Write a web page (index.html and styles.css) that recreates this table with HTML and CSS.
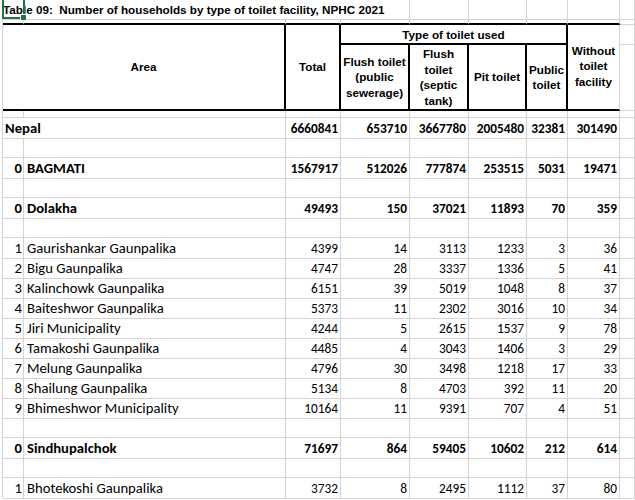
FILE: index.html
```html
<!DOCTYPE html>
<html lang="en">
<head>
<meta charset="utf-8">
<title>Table 09</title>
<link rel="stylesheet" href="styles.css">
</head>
<body>
<div class="sheet">
  <div class="row row-title">
    <div class="c title-cell">Table 09:&nbsp; Number of households by type of toilet facility, NPHC 2021</div>
    <div class="c"></div><div class="c"></div><div class="c"></div><div class="c"></div><div class="c"></div>
  </div>
  <div class="row row-gap">
    <div class="c k"></div><div class="c k"></div><div class="c k"></div><div class="c k"></div><div class="c k"></div><div class="c k"></div><div class="c k"></div><div class="c k"></div><div class="c"></div>
  </div>
  <div class="head">
    <div class="h h-area">Area</div>
    <div class="h h-total">Total</div>
    <div class="h h-type">Type of toilet used</div>
    <div class="h h-sub h-d">Flush toilet<br>(public<br>sewerage)</div>
    <div class="h h-sub h-e">Flush<br>toilet<br>(septic<br>tank)</div>
    <div class="h h-sub h-f">Pit toilet</div>
    <div class="h h-sub h-g">Public<br>toilet</div>
    <div class="h h-without">Without<br>toilet<br>facility</div>
    <div class="h h-i1"></div>
    <div class="h h-i2"></div>
  </div>
  <div class="row row-gap2">
    <div class="c"></div><div class="c"></div><div class="c"></div><div class="c"></div><div class="c"></div><div class="c"></div><div class="c"></div><div class="c"></div><div class="c"></div>
  </div>

  <div class="row data bold">
    <div class="c name span2 nepal">Nepal</div>
    <div class="c num">6660841</div><div class="c num">653710</div><div class="c num">3667780</div><div class="c num">2005480</div><div class="c num">32381</div><div class="c num">301490</div><div class="c"></div>
  </div>
  <div class="row data"><div class="c"></div><div class="c"></div><div class="c"></div><div class="c"></div><div class="c"></div><div class="c"></div><div class="c"></div><div class="c"></div><div class="c"></div></div>
  <div class="row data bold">
    <div class="c idx">0</div><div class="c name">BAGMATI</div>
    <div class="c num">1567917</div><div class="c num">512026</div><div class="c num">777874</div><div class="c num">253515</div><div class="c num">5031</div><div class="c num">19471</div><div class="c"></div>
  </div>
  <div class="row data"><div class="c"></div><div class="c"></div><div class="c"></div><div class="c"></div><div class="c"></div><div class="c"></div><div class="c"></div><div class="c"></div><div class="c"></div></div>
  <div class="row data bold">
    <div class="c idx">0</div><div class="c name">Dolakha</div>
    <div class="c num">49493</div><div class="c num">150</div><div class="c num">37021</div><div class="c num">11893</div><div class="c num">70</div><div class="c num">359</div><div class="c"></div>
  </div>
  <div class="row data"><div class="c"></div><div class="c"></div><div class="c"></div><div class="c"></div><div class="c"></div><div class="c"></div><div class="c"></div><div class="c"></div><div class="c"></div></div>
  <div class="row data">
    <div class="c idx">1</div><div class="c name">Gaurishankar Gaunpalika</div>
    <div class="c num">4399</div><div class="c num">14</div><div class="c num">3113</div><div class="c num">1233</div><div class="c num">3</div><div class="c num">36</div><div class="c"></div>
  </div>
  <div class="row data">
    <div class="c idx">2</div><div class="c name">Bigu Gaunpalika</div>
    <div class="c num">4747</div><div class="c num">28</div><div class="c num">3337</div><div class="c num">1336</div><div class="c num">5</div><div class="c num">41</div><div class="c"></div>
  </div>
  <div class="row data">
    <div class="c idx">3</div><div class="c name">Kalinchowk Gaunpalika</div>
    <div class="c num">6151</div><div class="c num">39</div><div class="c num">5019</div><div class="c num">1048</div><div class="c num">8</div><div class="c num">37</div><div class="c"></div>
  </div>
  <div class="row data">
    <div class="c idx">4</div><div class="c name">Baiteshwor Gaunpalika</div>
    <div class="c num">5373</div><div class="c num">11</div><div class="c num">2302</div><div class="c num">3016</div><div class="c num">10</div><div class="c num">34</div><div class="c"></div>
  </div>
  <div class="row data">
    <div class="c idx">5</div><div class="c name">Jiri Municipality</div>
    <div class="c num">4244</div><div class="c num">5</div><div class="c num">2615</div><div class="c num">1537</div><div class="c num">9</div><div class="c num">78</div><div class="c"></div>
  </div>
  <div class="row data">
    <div class="c idx">6</div><div class="c name">Tamakoshi Gaunpalika</div>
    <div class="c num">4485</div><div class="c num">4</div><div class="c num">3043</div><div class="c num">1406</div><div class="c num">3</div><div class="c num">29</div><div class="c"></div>
  </div>
  <div class="row data">
    <div class="c idx">7</div><div class="c name">Melung Gaunpalika</div>
    <div class="c num">4796</div><div class="c num">30</div><div class="c num">3498</div><div class="c num">1218</div><div class="c num">17</div><div class="c num">33</div><div class="c"></div>
  </div>
  <div class="row data">
    <div class="c idx">8</div><div class="c name">Shailung Gaunpalika</div>
    <div class="c num">5134</div><div class="c num">8</div><div class="c num">4703</div><div class="c num">392</div><div class="c num">11</div><div class="c num">20</div><div class="c"></div>
  </div>
  <div class="row data">
    <div class="c idx">9</div><div class="c name">Bhimeshwor Municipality</div>
    <div class="c num">10164</div><div class="c num">11</div><div class="c num">9391</div><div class="c num">707</div><div class="c num">4</div><div class="c num">51</div><div class="c"></div>
  </div>
  <div class="row data"><div class="c"></div><div class="c"></div><div class="c"></div><div class="c"></div><div class="c"></div><div class="c"></div><div class="c"></div><div class="c"></div><div class="c"></div></div>
  <div class="row data bold">
    <div class="c idx">0</div><div class="c name">Sindhupalchok</div>
    <div class="c num">71697</div><div class="c num">864</div><div class="c num">59405</div><div class="c num">10602</div><div class="c num">212</div><div class="c num">614</div><div class="c"></div>
  </div>
  <div class="row data"><div class="c"></div><div class="c"></div><div class="c"></div><div class="c"></div><div class="c"></div><div class="c"></div><div class="c"></div><div class="c"></div><div class="c"></div></div>
  <div class="row data">
    <div class="c idx">1</div><div class="c name">Bhotekoshi Gaunpalika</div>
    <div class="c num">3732</div><div class="c num">8</div><div class="c num">2495</div><div class="c num">1112</div><div class="c num">37</div><div class="c num">80</div><div class="c"></div>
  </div>

  <div class="selection"><span class="handle"></span></div>
</div>
</body>
</html>
```

FILE: styles.css
```css
html, body {
  margin: 0;
  padding: 0;
  background: #fff;
  overflow: hidden;
}
body {
  width: 635px;
  height: 500px;
  color: #000;
}
.sheet {
  position: relative;
  margin-left: 2px;
  border-left: 1px solid #d4d4d4;
  width: 632px;
  display: flex;
  flex-direction: column;
}
.row, .head {
  display: grid;
  grid-template-columns: 21px 262px 55px 69px 59px 58px 41px 52px 15px;
}
.c {
  box-sizing: border-box;
  border-right: 1px solid #d4d4d4;
  border-bottom: 1px solid #d4d4d4;
  min-width: 0;
}
.row-title { height: 20px; }
.title-cell {
  grid-column: 1 / 5;
  font-family: "Liberation Sans", Arial, sans-serif;
  font-weight: bold;
  font-size: 11.7px;
  line-height: 19px;
  white-space: nowrap;
}
.row-gap { height: 5px; }
.row-gap .k { border-bottom: 2px solid #000; }
.head {
  grid-template-rows: 20px 66px;
  font-family: "Liberation Sans", Arial, sans-serif;
  font-weight: bold;
  font-size: 11.7px;
  line-height: 15.5px;
}
.h {
  box-sizing: border-box;
  display: flex;
  align-items: center;
  justify-content: center;
  text-align: center;
  border-right: 2px solid #000;
  border-bottom: 2px solid #000;
}
.h-area { grid-column: 1 / 3; grid-row: 1 / 3; }
.h-total { grid-column: 3; grid-row: 1 / 3; }
.h-type { grid-column: 4 / 8; grid-row: 1; padding-top: 1px; }
.h-d { grid-column: 4; grid-row: 2; }
.h-e { grid-column: 5; grid-row: 2; }
.h-f { grid-column: 6; grid-row: 2; }
.h-g { grid-column: 7; grid-row: 2; }
.h-without { grid-column: 8; grid-row: 1 / 3; border-right: 1px solid #d4d4d4; padding-bottom: 2px; }
.h-i1 { grid-column: 9; grid-row: 1; border-right: 1px solid #d4d4d4; border-bottom: 1px solid #d4d4d4; }
.h-i2 { grid-column: 9; grid-row: 2; border-right: 1px solid #d4d4d4; border-bottom: 1px solid #d4d4d4; }
.row-gap2 { height: 7px; }
.data {
  height: 20px;
  font-family: Carlito, Calibri, Lato, sans-serif;
  font-size: 14.67px;
  line-height: 19px;
}
.data .c { padding-top: 1px; }
.bold { font-weight: bold; }
.num {
  font-size: 13.33px;
  text-align: right;
  padding-right: 2px;
  white-space: nowrap;
}
.idx {
  text-align: right;
  padding-right: 1px;
}
.name {
  padding-left: 3px;
  white-space: nowrap;
}
.span2 { grid-column: 1 / 3; }
.nepal { padding-left: 2px; }
.selection {
  position: absolute;
  left: -1px;
  top: -2px;
  width: 23px;
  height: 21px;
  box-sizing: border-box;
  border: 2px solid #217346;
}
.handle {
  position: absolute;
  right: -4px;
  bottom: -4px;
  width: 5px;
  height: 5px;
  background: #217346;
  border: 1px solid #fff;
}
```
